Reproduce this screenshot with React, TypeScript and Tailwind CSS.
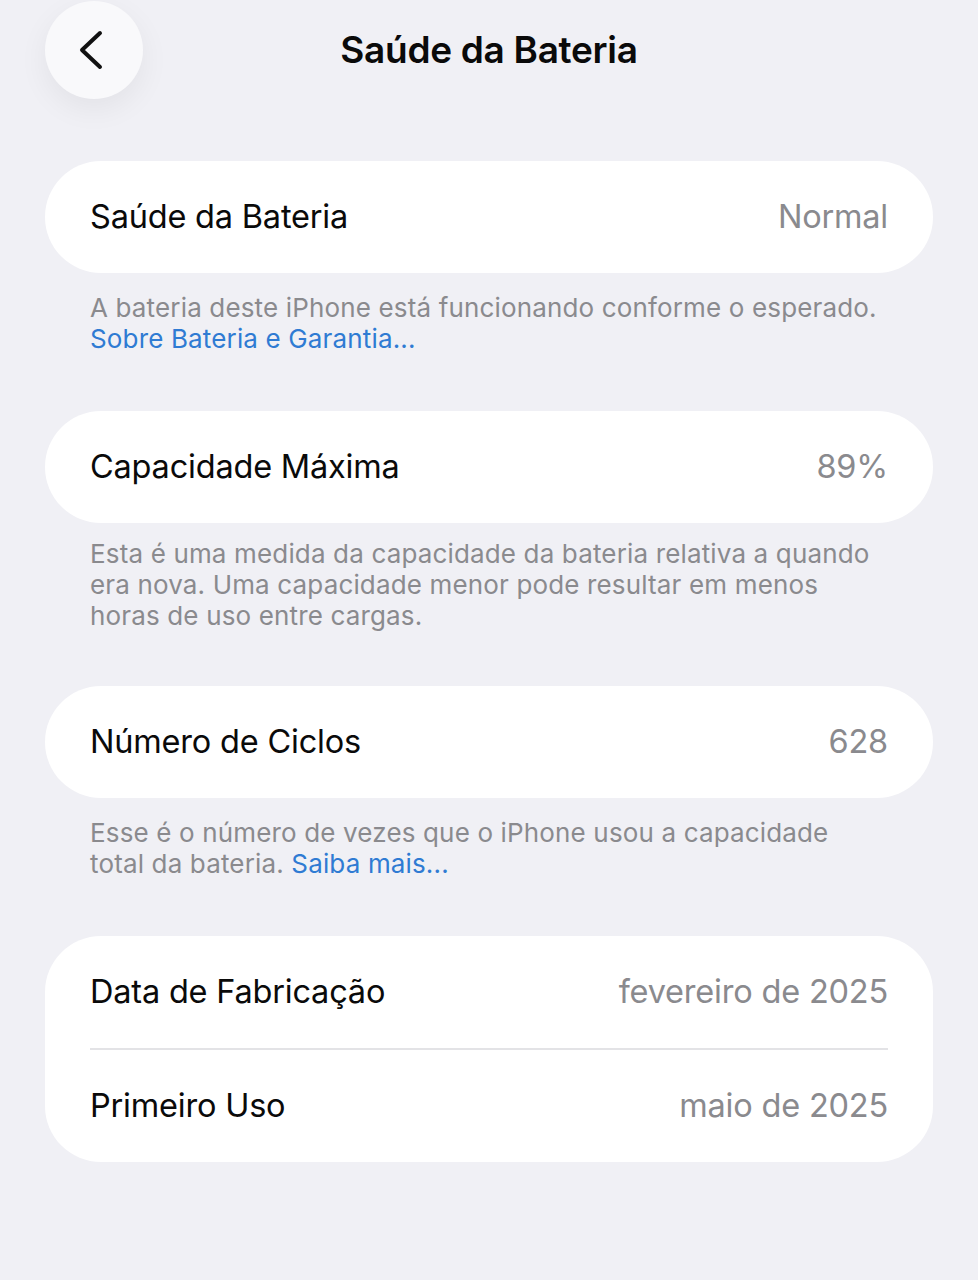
import React from 'react'

const font = { fontFamily: 'Inter, "Liberation Sans", Arial, sans-serif' }

function Row({ label, value }: { label: string; value: string }) {
  return (
    <div className="flex h-[112px] items-center justify-between px-[45px]">
      <span className="text-[32.5px] tracking-[-0.2px] text-[#0a0a0a]">{label}</span>
      <span className="text-[32.5px] tracking-[-0.2px] text-[#8a8a8e]">{value}</span>
    </div>
  )
}

function Card({ children }: { children: React.ReactNode }) {
  return <div className="mx-[45px] rounded-[56px] bg-white">{children}</div>
}

function Note({ children, className = '' }: { children: React.ReactNode; className?: string }) {
  return (
    <p className={`px-[90px] text-[26px] leading-[31px] tracking-[0.15px] text-[#8a8a8e] ${className}`}>
      {children}
    </p>
  )
}

export default function App() {
  return (
    <div className="min-h-[1280px] w-full bg-[#f0f0f5]" style={font}>
      <header className="relative flex h-[100px] items-center justify-center">
        <button className="absolute left-[45px] top-[1px] flex h-[98px] w-[98px] items-center justify-center rounded-full bg-[#f9f9fb] shadow-[0_10px_30px_rgba(0,0,0,0.06)]">
          <svg width="40" height="40" viewBox="0 0 40 40" fill="none" className="-ml-[1px]">
            <path d="M26 3 L8 20 L26 37" stroke="#111" strokeWidth="4" strokeLinecap="round" strokeLinejoin="round" />
          </svg>
        </button>
        <h1 className="text-[37px] font-semibold tracking-[-0.3px] text-[#0a0a0a]">Saúde da Bateria</h1>
      </header>

      <div className="pt-[61px]">
        <Card>
          <Row label="Saúde da Bateria" value="Normal" />
        </Card>
        <Note className="mt-[19px]">
          A bateria deste iPhone está funcionando conforme o esperado.
          <br />
          <span className="text-[#2f7bd3]">Sobre Bateria e Garantia...</span>
        </Note>
      </div>

      <div className="pt-[57px]">
        <Card>
          <Row label="Capacidade Máxima" value="89%" />
        </Card>
        <Note className="mt-[15px]">
          Esta é uma medida da capacidade da bateria relativa a quando era nova. Uma capacidade menor pode
          resultar em menos horas de uso entre cargas.
        </Note>
      </div>

      <div className="pt-[55px]">
        <Card>
          <Row label="Número de Ciclos" value="628" />
        </Card>
        <Note className="mt-[19px]">
          Esse é o número de vezes que o iPhone usou a capacidade total da bateria.{' '}
          <span className="text-[#2f7bd3]">Saiba mais...</span>
        </Note>
      </div>

      <div className="pt-[57px]">
        <Card>
          <Row label="Data de Fabricação" value="fevereiro de 2025" />
          <div className="mx-[45px] h-[2px] bg-[#e3e3e6]" />
          <Row label="Primeiro Uso" value="maio de 2025" />
        </Card>
      </div>
    </div>
  )
}
